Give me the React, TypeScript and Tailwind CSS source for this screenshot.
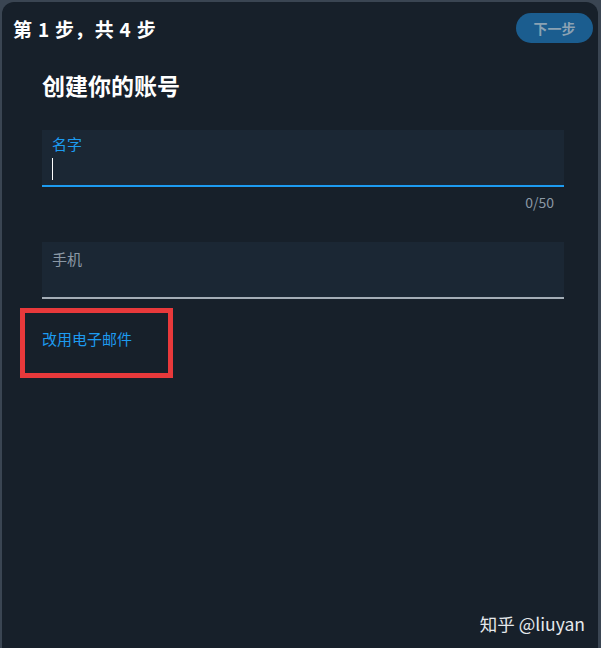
import React from "react";

export default function App() {
  return (
    <div
      className="w-[601px] h-[648px] bg-[#3a4552] pt-[2px] pl-[2px] pr-[3px] overflow-hidden"
      style={{ fontFamily: '"Noto Sans CJK SC", "Noto Sans", sans-serif' }}
    >
      <div className="relative h-full rounded-t-[12px] bg-[#17202a] flex flex-col">
        {/* header */}
        <div className="flex items-center justify-between h-[52px] pl-[11px] pr-[5px]">
          <div className="text-[19px] font-bold text-white leading-none tracking-[0.8px]">
            第 1 步，共 4 步
          </div>
          <button className="h-[30px] w-[77px] rounded-full bg-[#1b5d8f] text-[#8ba2b3] text-[14px] font-bold leading-none">
            下一步
          </button>
        </div>

        <div className="flex flex-col px-[40px] pr-[34px]">
          <h1 className="text-[23px] font-bold text-white leading-none mt-[20px]">
            创建你的账号
          </h1>

          {/* name input */}
          <div className="mt-[33px] h-[57px] bg-[#1b2734] border-b-2 border-[#1d9bf0] px-[10px] pt-[4px] flex flex-col">
            <span className="text-[15px] text-[#1d9bf0] leading-[20px]">名字</span>
            <span className="mt-[4px] w-[1px] h-[22px] bg-white" />
          </div>
          <div className="text-right text-[14px] text-[#8b98a5] pr-[10px] mt-[5px] leading-[20px]">
            0/50
          </div>

          {/* phone input */}
          <div className="mt-[30px] h-[57px] bg-[#1b2734] border-b-2 border-[#a4adb6] px-[10px] pt-[4px]">
            <span className="text-[15px] text-[#8b98a5] leading-[20px]">手机</span>
          </div>

          <div className="mt-[30px] text-[15px] text-[#1d9bf0] leading-[20px]">
            改用电子邮件
          </div>
        </div>

        {/* annotation */}
        <div className="absolute left-[18px] top-[306px] w-[153px] h-[70px] border-[5px] border-[#e8393b]" />

        {/* watermark */}
        <div className="absolute right-[13px] bottom-[16px] text-[17.5px] text-[#e6e9ec] leading-none">
          知乎 @liuyan
        </div>
      </div>
    </div>
  );
}
